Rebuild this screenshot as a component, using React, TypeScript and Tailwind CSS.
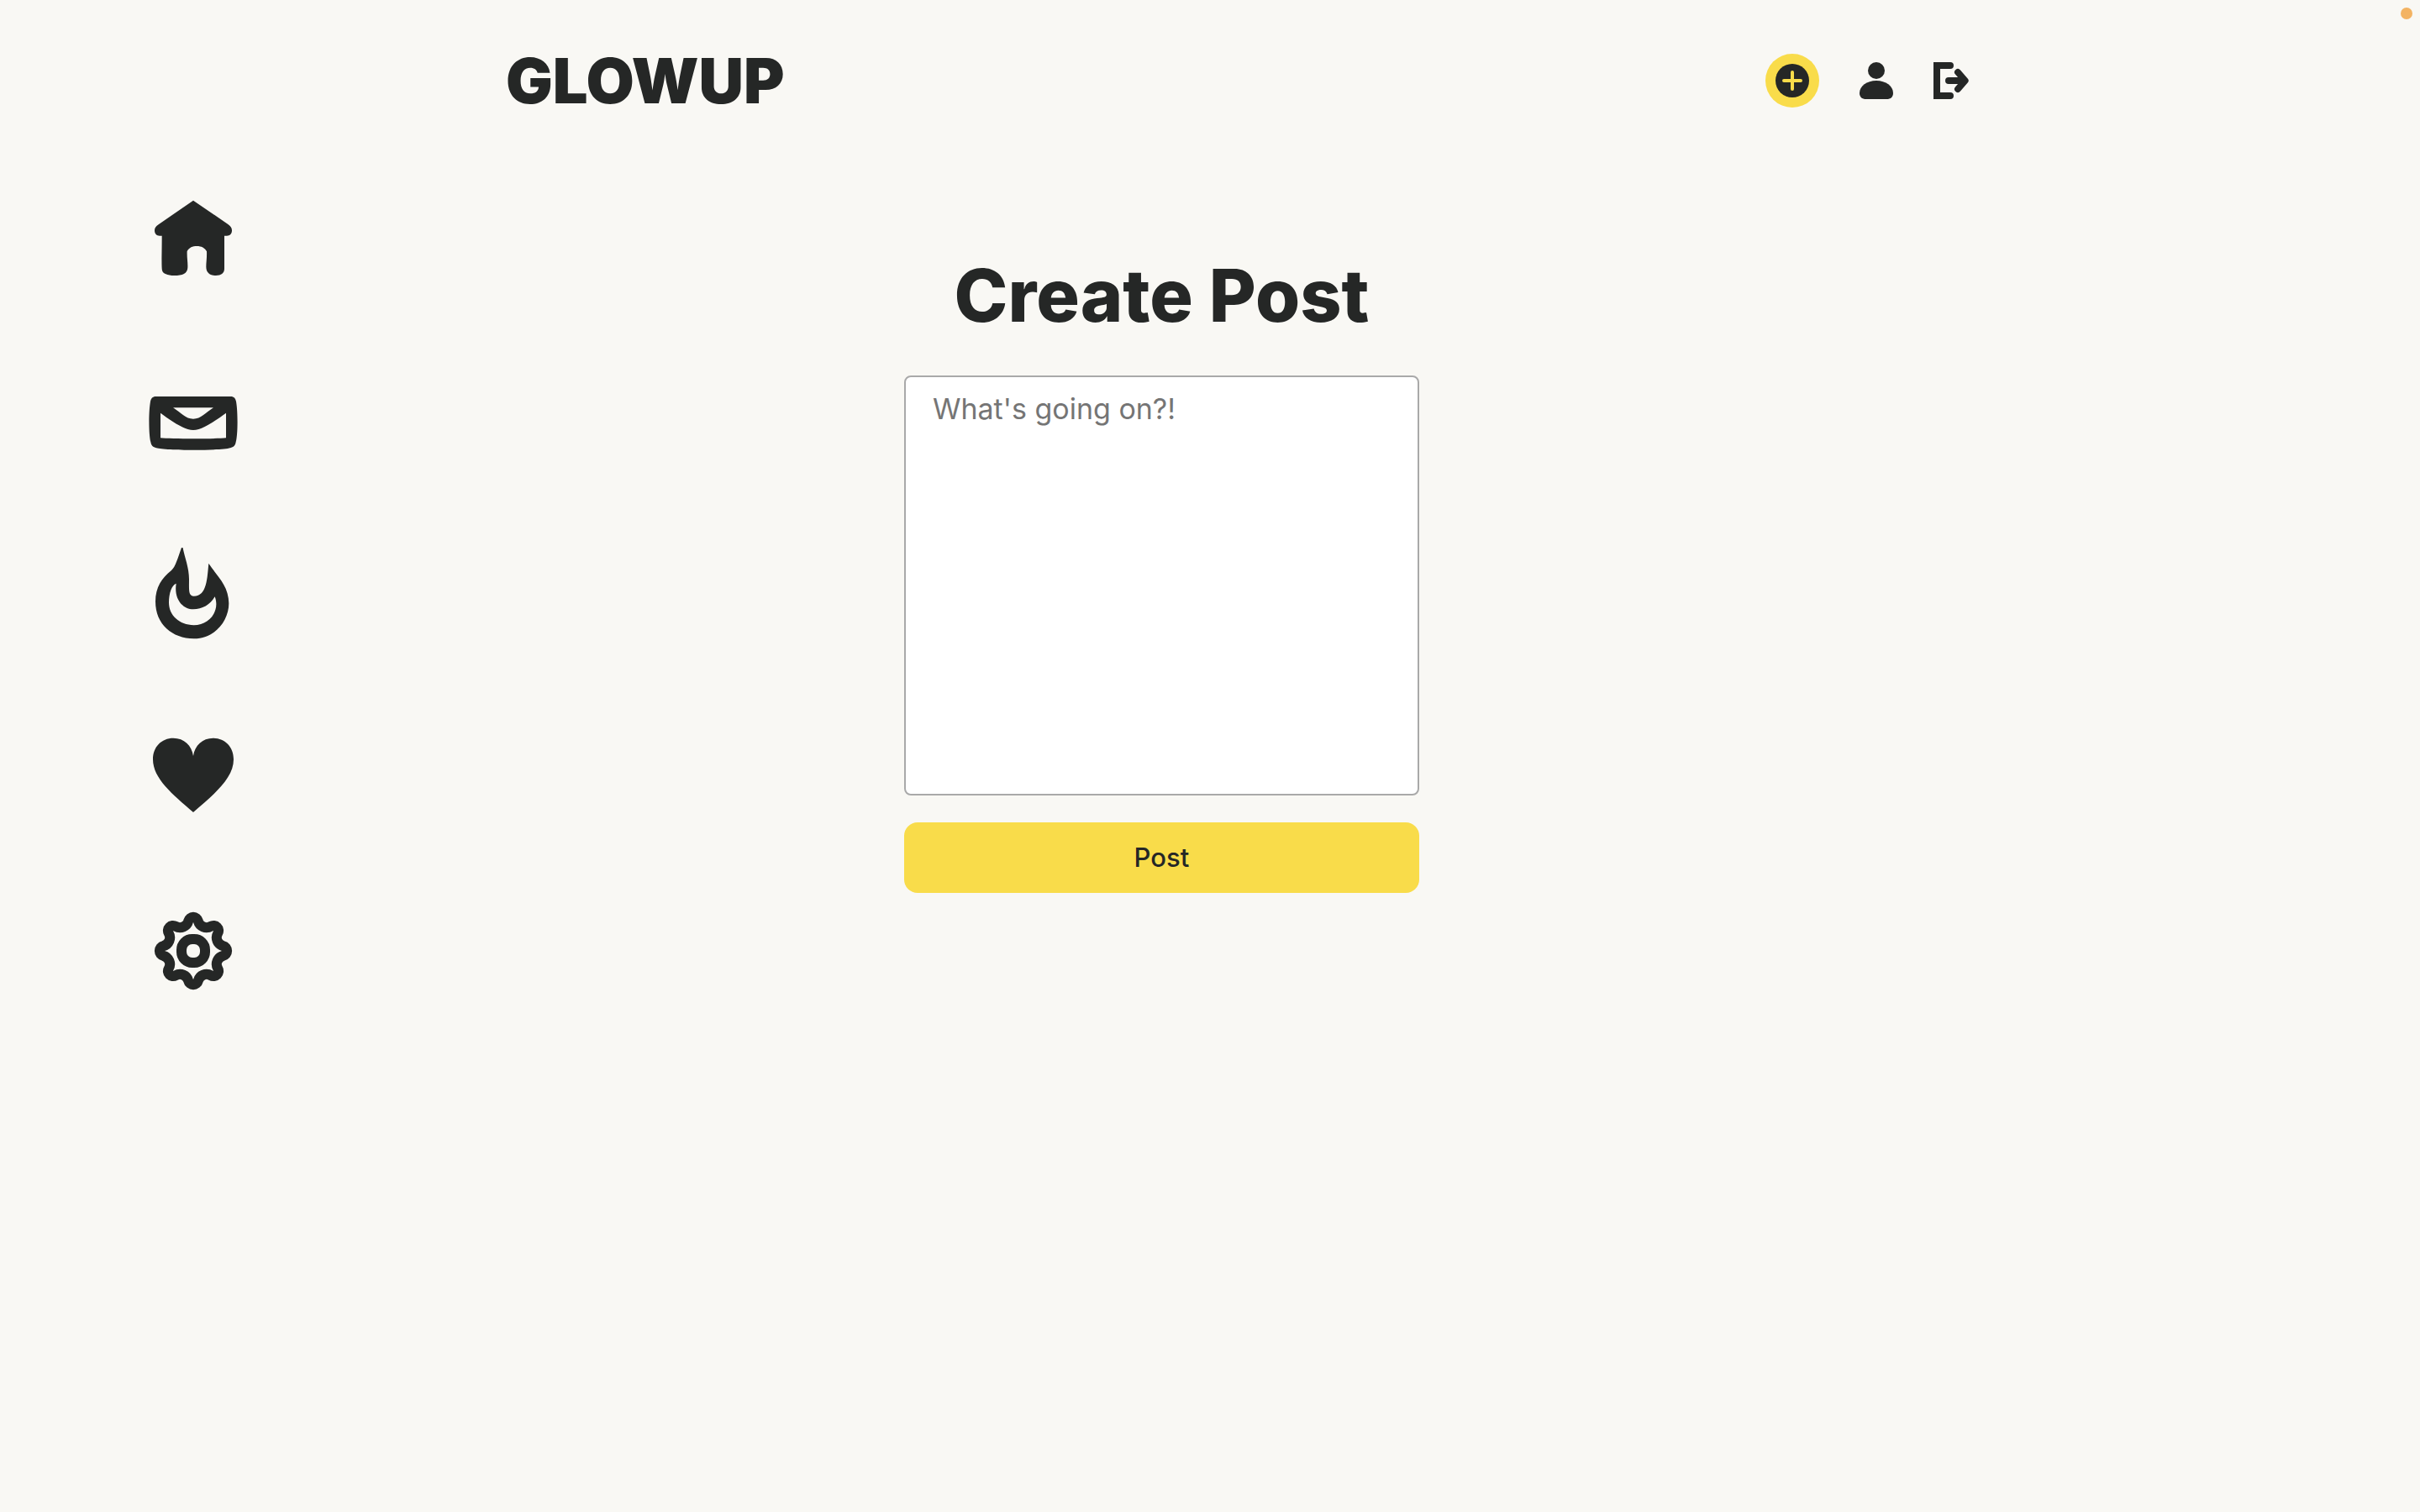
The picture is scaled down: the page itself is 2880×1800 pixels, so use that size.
import type { ReactNode } from "react";

const GEAR =
  "M-17.5 -106.6 A18 18 0 0 1 17.5 -106.6 A31 31 0 0 0 63 -87.7 A18 18 0 0 1 87.7 -63 A31 31 0 0 0 106.6 -17.5 A18 18 0 0 1 106.6 17.5 A31 31 0 0 0 87.7 63 A18 18 0 0 1 63 87.7 A31 31 0 0 0 17.5 106.6 A18 18 0 0 1 -17.5 106.6 A31 31 0 0 0 -63 87.7 A18 18 0 0 1 -87.7 63 A31 31 0 0 0 -106.6 17.5 A18 18 0 0 1 -106.6 -17.5 A31 31 0 0 0 -87.7 -63 A18 18 0 0 1 -63 -87.7 A31 31 0 0 0 -17.5 -106.6 Z";

type NavItem = { label: string; viewBox: string; art: ReactNode };

const navItems: NavItem[] = [
  {
    label: "Home",
    viewBox: "30 24 360 336",
    art: (
      <path d="M210 56 L334 141 C344 148 348 154 348 163 C348 175 341 182 330 182 H321 V300 C321 316 309 324 291 324 C270 324 256 314 256 293 C256 277 259 262 258 238 C251 225 239 219 223 219 C207 219 196 224 188 237 C187 262 191 276 190 296 C189 316 172 324 142 324 C118 324 101 317 99 306 C96 290 98 250 98 182 H90 C79 182 72 175 72 163 C72 154 76 148 87 141 Z" />
    ),
  },
  {
    label: "Messages",
    viewBox: "30 -30 360 336",
    art: (
      <path
        fillRule="evenodd"
        d="M76 66 H344 C355 66 361 73 363 84 C369 115 370 200 362 229 C360 241 354 247 342 250 C310 260 110 260 78 250 C66 247 60 241 58 229 C50 200 51 115 57 84 C59 73 65 66 76 66 Z M138 106 C168 125 182 146 210 146 C238 146 252 125 282 106 Z M93 125 V214 C130 218 290 218 327 214 V125 C290 152 242 186 210 186 C178 186 130 152 93 125 Z"
      />
    ),
  },
  {
    label: "Trending",
    viewBox: "30 66 360 336",
    art: (
      <path
        fillRule="evenodd"
        d="M171 58 C178 98 195 135 195 178 C195 216 192 239 212 239 C260 239 260 170 265 122 C292 165 337 200 337 265 C337 325 290 391 212 391 C135 390 75 340 75 258 C75 208 98 174 132 147 C148 133 156 97 171 58 Z M149 194 C133 200 123 228 123 262 C123 308 160 342 212 343 C265 343 307 294 287 241 C270 270 242 286 210 286 C174 286 140 252 149 194 Z"
      />
    ),
  },
  {
    label: "Favourites",
    viewBox: "30 12 360 336",
    art: (
      <path d="M210 120 C205 82 177 56 139 56 C96 56 66 88 66 132 C66 200 136 257 210 321 C284 257 354 200 354 132 C354 88 324 56 281 56 C243 56 215 82 210 120 Z" />
    ),
  },
  {
    label: "Settings",
    viewBox: "30 18 360 336",
    art: (
      <g transform="translate(210 186)" fill="none" stroke="currentColor" strokeWidth="36">
        <path d={GEAR} />
        <rect x="-42" y="-42" width="84" height="84" rx="38" />
      </g>
    ),
  },
];

function Sidebar() {
  return (
    <nav aria-label="Main" className="flex flex-col items-center gap-[100px] pt-9">
      {navItems.map((item) => (
        <a key={item.label} href="#" aria-label={item.label} className="block">
          <svg viewBox={item.viewBox} className="h-28 w-[120px]" fill="currentColor" aria-hidden="true">
            {item.art}
          </svg>
        </a>
      ))}
    </nav>
  );
}

function Header() {
  return (
    <header className="flex h-48 items-center justify-between pr-[18.65%] pl-[20.9%]">
      <a href="#" className="text-[74px] leading-none font-black">
        GLOWUP
      </a>
      <div className="flex items-center gap-12">
        <button type="button" aria-label="Create post" className="size-16 rounded-full bg-[#f9dc4a]">
          <svg viewBox="63 72 192 192" className="size-16" aria-hidden="true">
            <circle cx="159" cy="168" r="60" fill="currentColor" />
            <path d="M129 168 H189 M159 138 V198" stroke="#f9dc4a" strokeWidth="12" strokeLinecap="round" />
          </svg>
        </button>
        <button type="button" aria-label="Profile">
          <svg viewBox="399 102 120 132" className="h-11 w-10" fill="currentColor" aria-hidden="true">
            <circle cx="459" cy="132" r="30" />
            <path d="M399 212 C399 188 425 168 459 168 C493 168 519 188 519 212 C519 226 511 234 495 234 H423 C407 234 399 226 399 212 Z" />
          </svg>
        </button>
        <button type="button" aria-label="Log out">
          <svg
            viewBox="663 102 126 132"
            className="h-11 w-[42px]"
            fill="currentColor"
            aria-hidden="true"
          >
            <path d="M663 102 H723 A12 12 0 0 1 723 126 H687 V210 H723 A12 12 0 0 1 723 234 H663 Z" />
            <path
              d="M717 168 H770 M750 138 L776 168 L750 198"
              stroke="currentColor"
              strokeWidth="24"
              strokeLinecap="round"
              strokeLinejoin="round"
            />
          </svg>
        </button>
      </div>
    </header>
  );
}

function CreatePost() {
  return (
    <main className="flex justify-center pt-[108px]">
      <form className="flex w-[613px] max-w-full flex-col" onSubmit={(e) => e.preventDefault()}>
        <h1 className="text-center text-[86px] leading-[104px] font-extrabold whitespace-nowrap">
          Create Post
        </h1>
        <textarea
          aria-label="Post text"
          placeholder="What's going on?!"
          className="mt-[43px] h-[500px] resize-none rounded-lg border-2 border-[#a9a9a9] bg-white px-8 py-[18px] text-[34px] leading-10 placeholder:text-[#757575]"
        />
        <button type="submit" className="mt-8 h-[84px] rounded-2xl bg-[#f9dc4a] text-[31px] leading-9 font-medium">
          Post
        </button>
      </form>
    </main>
  );
}

export default function App() {
  return (
    <div className="relative min-h-screen bg-[#f9f8f4] font-['Inter',sans-serif] text-[#252726]">
      <span className="absolute top-[9px] right-[9px] size-3.5 rounded-full bg-[#f3b362]" />
      <Header />
      <div className="grid grid-cols-[16%_64%_20%]">
        <Sidebar />
        <CreatePost />
      </div>
    </div>
  );
}
